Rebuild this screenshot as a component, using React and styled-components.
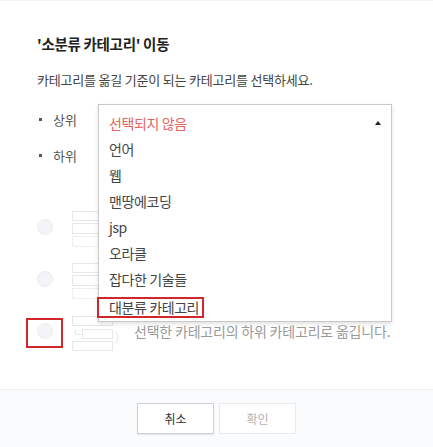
import React from 'react';
import styled, { createGlobalStyle } from 'styled-components';

const GlobalStyle = createGlobalStyle`
  html, body {
    margin: 0;
    padding: 0;
    background: #fff;
  }
  body {
    font-family: "Noto Sans CJK KR", "Noto Sans", sans-serif;
    color: #333;
  }
`;

const Dialog = styled.div`
  width: 433px;
  height: 447px;
  display: flex;
  flex-direction: column;
  box-shadow: inset 0 1px 0 #f2f3f5;
`;

const Body = styled.div`
  flex: 1;
  padding: 34px 41px 0 37px;
`;

const Title = styled.h2`
  margin: 0;
  font-size: 14.5px;
  line-height: 20px;
  font-weight: 700;
  color: #222;
  letter-spacing: -0.3px;
`;

const Description = styled.p`
  margin: 17px 0 0;
  font-size: 13px;
  line-height: 18px;
  color: #444;
  letter-spacing: -0.2px;
`;

const FieldList = styled.ul`
  list-style: none;
  margin: 15px 0 0;
  padding: 0;
  display: flex;
  flex-direction: column;
  gap: 6px;
`;

const FieldRow = styled.li`
  display: flex;
  align-items: center;
  height: 30px;
`;

const Label = styled.span`
  width: 61px;
  display: flex;
  align-items: center;
  font-size: 13px;
  color: #555;

  &::before {
    content: '';
    width: 3px;
    height: 3px;
    background: #555;
    margin: 0 11px 0 2px;
  }
`;

const SelectWrap = styled.div`
  position: relative;
  width: 294px;
  height: 30px;
`;

const SelectBox = styled.div`
  box-sizing: border-box;
  height: 30px;
  border: 1px solid #ddd;
  background: #fff;
`;

const Menu = styled.ul`
  position: absolute;
  top: 0;
  left: 0;
  z-index: 10;
  box-sizing: border-box;
  width: 294px;
  margin: 0;
  padding: 5px 0 3px;
  list-style: none;
  background: #fff;
  border: 1px solid #c9c9c9;
  box-shadow: 0 2px 4px rgba(0, 0, 0, 0.12);
`;

const MenuItem = styled.li`
  position: relative;
  height: 26px;
  line-height: 26px;
  padding-left: 10px;
  font-size: 14px;
  letter-spacing: -0.4px;
  color: ${({ $placeholder }) => ($placeholder ? '#e4645e' : '#444')};
`;

const Caret = styled.span`
  position: absolute;
  right: 10px;
  top: 11px;
  width: 0;
  height: 0;
  border-left: 3px solid transparent;
  border-right: 3px solid transparent;
  border-bottom: 4px solid #222;
`;

const Marked = styled.span`
  display: inline-block;
  margin-left: -12px;
  padding: 0 3px 0 10px;
  height: 17px;
  line-height: 16px;
  border: 2px solid #d3262b;
  vertical-align: middle;
`;

const OptionList = styled.div`
  margin-top: 35px;
  display: flex;
  flex-direction: column;
  gap: 8px;
`;

const OptionRow = styled.label`
  display: flex;
  align-items: center;
  height: 44px;
`;

const Radio = styled.span`
  position: relative;
  box-sizing: border-box;
  width: 16px;
  height: 16px;
  border-radius: 50%;
  background: #f2f4f7;
  border: 1px solid #e9ecf0;
  flex: none;

  ${({ $marked }) =>
    $marked &&
    `
    &::after {
      content: '';
      position: absolute;
      left: -12px;
      top: -6px;
      width: 37px;
      height: 30px;
      box-sizing: border-box;
      border: 2px solid #d3262b;
    }
  `}
`;

const Figure = styled.svg`
  margin-left: 18px;
  flex: none;
`;

const OptionText = styled.span`
  margin-left: 13px;
  font-size: 14px;
  color: #9a9a9a;
  letter-spacing: -0.2px;
  white-space: nowrap;
`;

const Footer = styled.div`
  height: 58px;
  box-sizing: border-box;
  border-top: 1px solid #eeeff1;
  background: #fafbfc;
  display: flex;
  justify-content: center;
  padding-top: 13px;
  gap: 5px;
`;

const Button = styled.button`
  width: 77px;
  height: 31px;
  box-sizing: border-box;
  background: #fff;
  font-family: inherit;
  font-size: 12px;
  border: 1px solid ${({ $disabled }) => ($disabled ? '#e9eaec' : '#cdd0d4')};
  color: ${({ $disabled }) => ($disabled ? '#b3b3b3' : '#333')};
  box-shadow: ${({ $disabled }) => ($disabled ? 'none' : '0 1px 1px rgba(0,0,0,0.08)')};
`;

const StackFigure = () => (
  <Figure width="50" height="44" viewBox="0 0 50 44" fill="none" stroke="#e6e7e9">
    <rect x="1.5" y="6.5" width="40" height="9" />
    <rect x="1.5" y="18.5" width="40" height="10" />
    <rect x="1.5" y="31.5" width="40" height="10" strokeDasharray="2 1" />
  </Figure>
);

const NestFigure = () => (
  <Figure width="50" height="44" viewBox="0 0 50 44" fill="none" stroke="#e6e7e9">
    <rect x="1.5" y="7.5" width="40" height="9" />
    <path d="M4.5 20.5v5h5" />
    <rect x="11.5" y="20.5" width="30" height="9" />
    <rect x="1.5" y="32.5" width="40" height="9" />
    <path d="M44.5 22.5c3 3 3 9 0 12" />
  </Figure>
);

const categories = ['언어', '웹', '맨땅에코딩', 'jsp', '오라클', '잡다한 기술들'];

const App = () => (
  <>
    <GlobalStyle />
    <Dialog>
      <Body>
        <Title>'소분류 카테고리' 이동</Title>
        <Description>카테고리를 옮길 기준이 되는 카테고리를 선택하세요.</Description>
        <FieldList>
          <FieldRow>
            <Label>상위</Label>
            <SelectWrap>
              <SelectBox />
              <Menu>
                <MenuItem $placeholder>
                  선택되지 않음
                  <Caret />
                </MenuItem>
                {categories.map((name) => (
                  <MenuItem key={name}>{name}</MenuItem>
                ))}
                <MenuItem>
                  <Marked>대분류 카테고리</Marked>
                </MenuItem>
              </Menu>
            </SelectWrap>
          </FieldRow>
          <FieldRow>
            <Label>하위</Label>
            <SelectWrap>
              <SelectBox />
            </SelectWrap>
          </FieldRow>
        </FieldList>
        <OptionList>
          <OptionRow>
            <Radio />
            <StackFigure />
          </OptionRow>
          <OptionRow>
            <Radio />
            <StackFigure />
          </OptionRow>
          <OptionRow>
            <Radio $marked />
            <NestFigure />
            <OptionText>선택한 카테고리의 하위 카테고리로 옮깁니다.</OptionText>
          </OptionRow>
        </OptionList>
      </Body>
      <Footer>
        <Button>취소</Button>
        <Button $disabled>확인</Button>
      </Footer>
    </Dialog>
  </>
);

export default App;
